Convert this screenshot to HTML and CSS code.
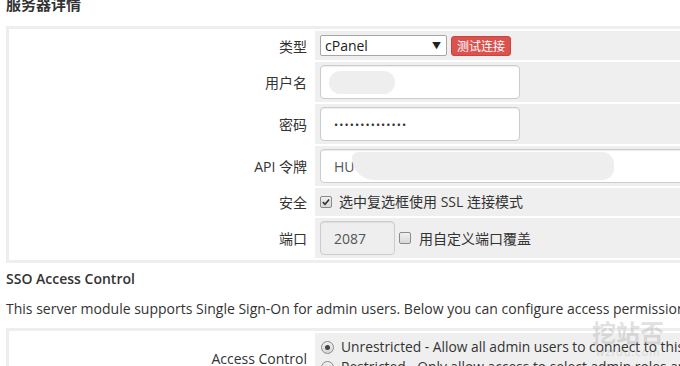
FILE: index.html
```html
<!DOCTYPE html>
<html lang="zh">
<head>
<meta charset="utf-8">
<title>服务器详情</title>
<link rel="stylesheet" href="styles.css">
</head>
<body>
<div class="page">
  <h2 class="title">服务器详情</h2>
  <div class="formbox">
    <div class="lbl">类型</div>
    <div class="fld fld-type">
      <div class="select"><span>cPanel</span><span class="arrow">▼</span></div>
      <button class="btn-danger">测试连接</button>
    </div>

    <div class="lbl">用户名</div>
    <div class="fld fld-input">
      <div class="input w200"><span class="blur blur-user"></span></div>
    </div>

    <div class="lbl">密码</div>
    <div class="fld fld-input">
      <div class="input w200 dots">••••••••••••••</div>
    </div>

    <div class="lbl">API 令牌</div>
    <div class="fld fld-input">
      <div class="input wide"><span>HU</span><span class="blur blur-token"></span></div>
    </div>

    <div class="lbl">安全</div>
    <div class="fld fld-check">
      <span class="cb checked"><svg viewBox="0 0 12 12" width="10" height="10"><path d="M2.2 6.2 L4.8 8.8 L9.8 3" fill="none" stroke="#333" stroke-width="2"/></svg></span>
      <span>选中复选框使用 SSL 连接模式</span>
    </div>

    <div class="lbl">端口</div>
    <div class="fld fld-port">
      <div class="input port disabled">2087</div>
      <span class="cb"></span>
      <span class="port-label">用自定义端口覆盖</span>
    </div>
  </div>

  <h3 class="subtitle">SSO Access Control</h3>
  <p class="desc">This server module supports Single Sign-On for admin users. Below you can configure access permissions for this server.</p>

  <div class="formbox">
    <div class="lbl">Access Control</div>
    <div class="fld fld-radios">
      <div class="radio-line"><span class="radio on"></span><span>Unrestricted - Allow all admin users to connect to this server</span></div>
      <div class="radio-line"><span class="radio"></span><span>Restricted - Only allow access to select admin roles and users</span></div>
    </div>
  </div>
</div>
<div class="watermark"><div class="wm-cn">挖站否</div><div class="wm-en">wzfou.com</div></div>
</body>
</html>
```
FILE: styles.css
```css
html, body {
  margin: 0;
  padding: 0;
}
body {
  width: 680px;
  height: 366px;
  overflow: hidden;
  position: relative;
  background: #fff;
  color: #333;
  font-family: "Open Sans", "Noto Sans CJK SC", sans-serif;
  font-size: 14px;
}
.page {
  width: 1000px;
}
.title {
  margin: -6px 0 12px 6px;
  font-size: 15px;
  line-height: 20px;
  font-weight: bold;
}
.formbox {
  margin-left: 6px;
  display: grid;
  grid-template-columns: 302px 1fr;
  gap: 2px;
  padding: 2px;
  border: 3px solid #eee;
}
.lbl {
  display: flex;
  align-items: center;
  justify-content: flex-end;
  padding-right: 6px;
  background: #fff;
}
.fld {
  background: #efefef;
  display: flex;
  align-items: center;
}
.fld-type {
  padding: 4px 5px;
  height: 21px;
}
.select {
  box-sizing: border-box;
  width: 127px;
  height: 21px;
  border: 1px solid #a6a6a6;
  border-radius: 2px;
  background: #fff;
  display: flex;
  align-items: center;
  justify-content: space-between;
  padding: 0 5px 0 4px;
  font-size: 14px;
  color: #222;
}
.arrow {
  font-size: 9px;
  color: #222;
}
.btn-danger {
  margin-left: 4px;
  height: 20px;
  padding: 0 5px;
  border: 1px solid #d43f3a;
  border-radius: 3px;
  background: #d9534f;
  color: #fff;
  font-family: "Noto Sans CJK SC", sans-serif;
  font-size: 12px;
  line-height: 18px;
}
.fld-input {
  padding: 3px 5px;
}
.input {
  box-sizing: border-box;
  height: 34px;
  border: 1px solid #ccc;
  border-radius: 4px;
  background: #fff;
  box-shadow: inset 0 1px 1px rgba(0,0,0,.075);
  padding: 0 13px;
  display: flex;
  align-items: center;
  color: #555;
  font-size: 14px;
}
.w200 { width: 200px; }
.wide { width: 620px; padding-left: 13px; }
.dots { font-size: 11px; letter-spacing: 1.1px; color: #333; }
.blur {
  display: block;
  background: #eeeeee;
  border-radius: 14px;
}
.blur-user {
  width: 66px;
  height: 23px;
  margin-left: -5px;
}
.blur-token {
  width: 262px;
  height: 28px;
  margin-left: -3px;
  border-radius: 8px 16px 16px 30px;
}
.fld-check {
  padding: 4px 5px;
  line-height: 20px;
}
.cb {
  box-sizing: border-box;
  width: 12px;
  height: 12px;
  border: 1px solid #8a8a8a;
  border-radius: 2px;
  background: linear-gradient(#f0f0f0, #d8d8d8);
  display: inline-flex;
  align-items: center;
  justify-content: center;
  margin-right: 7px;
  flex: none;
}
.fld-port {
  padding: 3px 5px;
}
.port {
  width: 75px;
  padding-left: 13px;
}
.disabled {
  background: #eee;
}
.fld-port .cb {
  margin-left: 4px;
}
.port-label {
  margin-left: 1px;
}
.subtitle {
  margin: 6px 0 10px 6px;
  font-size: 14px;
  line-height: 20px;
  font-weight: 600;
}
.desc {
  margin: 0 0 9px 6px;
  font-size: 14px;
  line-height: 20px;
  white-space: nowrap;
}
.fld-radios {
  flex-direction: column;
  align-items: flex-start;
  padding: 4px 5px 6px;
}
.radio-line {
  display: flex;
  align-items: center;
  line-height: 20px;
  white-space: nowrap;
  font-size: 13.8px;
}
.radio {
  box-sizing: border-box;
  width: 13px;
  height: 13px;
  border: 1px solid #8a8a8a;
  border-radius: 50%;
  background: linear-gradient(#f0f0f0, #d8d8d8);
  margin: 0 7px 0 1px;
  display: inline-flex;
  align-items: center;
  justify-content: center;
}
.radio.on::after {
  content: "";
  width: 5px;
  height: 5px;
  border-radius: 50%;
  background: #444;
}
.watermark {
  position: absolute;
  left: 588px;
  top: 318px;
  width: 80px;
  text-align: center;
  color: rgba(150,150,150,0.3);
  pointer-events: none;
}
.wm-cn {
  font-family: "Noto Sans CJK SC", sans-serif;
  font-size: 24px;
  font-weight: bold;
  line-height: 28px;
}
.wm-en {
  font-size: 11px;
  line-height: 12px;
  letter-spacing: 1px;
}
```
